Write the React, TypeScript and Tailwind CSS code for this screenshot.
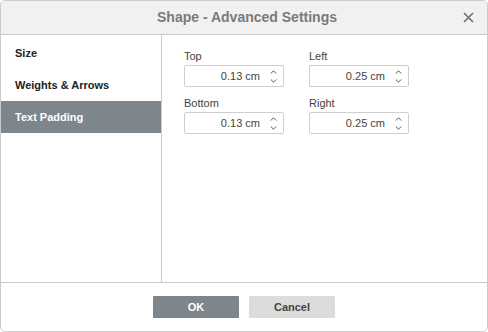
import React from "react";

const font = { fontFamily: '"Liberation Sans", Arial, sans-serif' };

function Spin() {
  return (
    <div className="flex flex-col items-center justify-center gap-[5px] w-[12px]">
      <svg width="7" height="4" viewBox="0 0 7 4"><path d="M0.8 3.5 L3.5 0.8 L6.2 3.5" fill="none" stroke="#555" strokeWidth="1" /></svg>
      <svg width="7" height="4" viewBox="0 0 7 4"><path d="M0.8 0.5 L3.5 3.2 L6.2 0.5" fill="none" stroke="#555" strokeWidth="1" /></svg>
    </div>
  );
}

function Field({ label, value }: { label: string; value: string }) {
  return (
    <div className="flex flex-col">
      <div className="text-[11px] leading-[14px] text-[#444] h-[15px]">{label}</div>
      <div className="mt-[1px] w-[100px] h-[22px] border border-[#cfcfcf] rounded-[2px] bg-white flex items-center justify-end pr-[4px]">
        <span className="text-[11px] text-[#444] mr-[7px]">{value}</span>
        <Spin />
      </div>
    </div>
  );
}

export default function App() {
  return (
    <div className="w-[488px] h-[332px] bg-white" style={font}>
      <div className="w-[488px] h-[332px] border border-[#cbcbcb] rounded-[5px] overflow-hidden flex flex-col">
        <div className="h-[34px] shrink-0 bg-[#f1f1f1] border-b border-[#cbcbcb] relative flex items-center justify-center">
          <span className="text-[14px] font-bold text-[#7a7a7a] pl-[6px]">Shape - Advanced Settings</span>
          <svg className="absolute right-[13px] top-[11px]" width="11" height="11" viewBox="0 0 11 11">
            <path d="M1 1 L10 10 M10 1 L1 10" stroke="#6e6e6e" strokeWidth="1.6" />
          </svg>
        </div>
        <div className="flex flex-1 min-h-0">
          <div className="w-[161px] shrink-0 border-r border-[#cbcbcb] pt-[2px] flex flex-col">
            <div className="h-[32px] flex items-center pl-[14px] text-[11px] font-bold text-[#222]">Size</div>
            <div className="h-[32px] flex items-center pl-[14px] text-[11px] font-bold text-[#222]">Weights &amp; Arrows</div>
            <div className="h-[32px] flex items-center pl-[14px] text-[11px] font-bold text-white bg-[#7e868d]">Text Padding</div>
          </div>
          <div className="flex-1 pt-[14px] pl-[22px]">
            <div className="grid grid-cols-[100px_100px] gap-x-[25px] gap-y-[9px]">
              <Field label="Top" value="0.13 cm" />
              <Field label="Left" value="0.25 cm" />
              <Field label="Bottom" value="0.13 cm" />
              <Field label="Right" value="0.25 cm" />
            </div>
          </div>
        </div>
        <div className="h-[49px] shrink-0 border-t border-[#cbcbcb] flex items-center justify-center gap-[10px]">
          <button className="w-[86px] h-[22px] bg-[#7e868d] text-white text-[11px] font-bold rounded-[1px]">OK</button>
          <button className="w-[86px] h-[22px] bg-[#dcdcdc] text-[#444] text-[11px] font-bold rounded-[1px]">Cancel</button>
        </div>
      </div>
    </div>
  );
}
